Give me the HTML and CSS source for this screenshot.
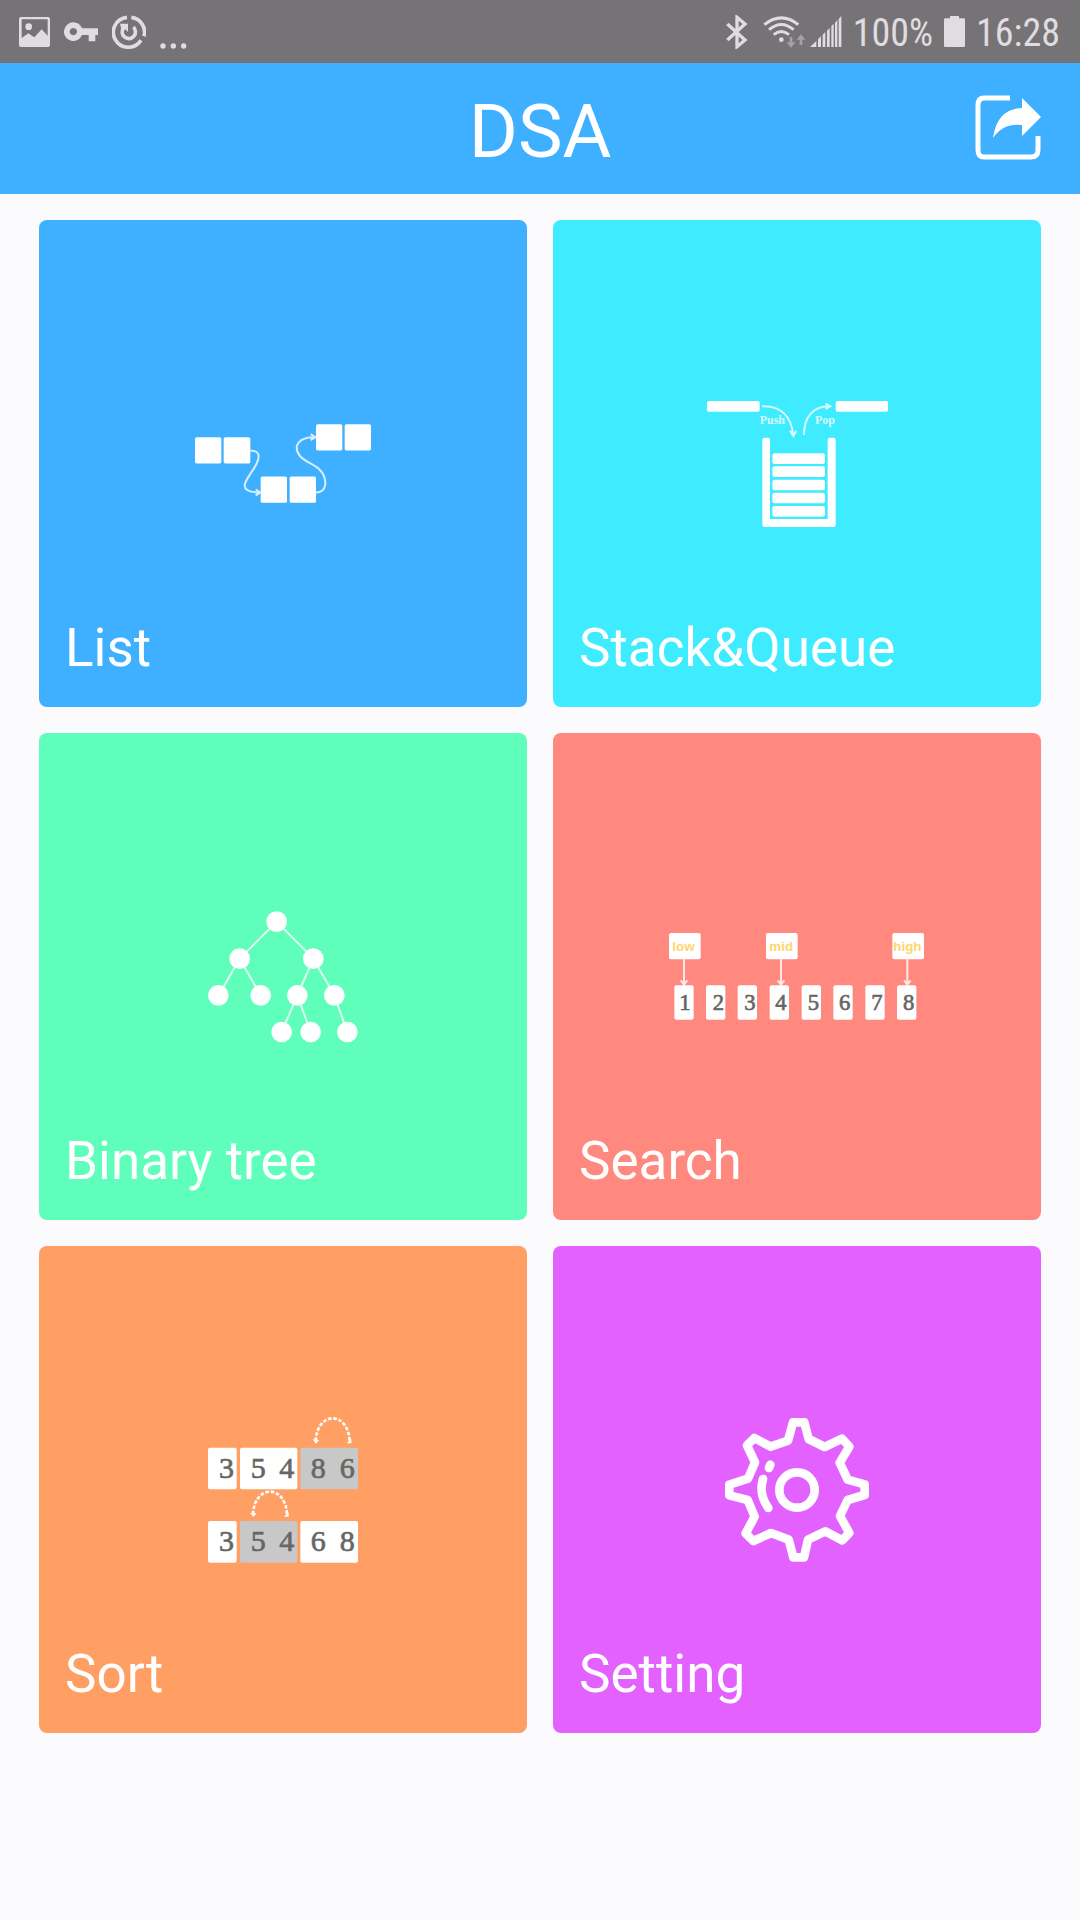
FILE: index.html
```
<!DOCTYPE html>
<html lang="en">
<head>
  <meta charset="UTF-8">
  <title>DSA</title>
  <meta name="viewport" content="width=device-width, initial-scale=1.0">
  <link rel="stylesheet" href="styles.css">
</head>
<body>
  <div class="status">
    <div class="status-left">
      <svg width="31" height="30" viewBox="57 48 93 90">
        <path fill="currentColor" fill-rule="evenodd" d="M63 48h81q6 0 6 6v78q0 6-6 6H63q-6 0-6-6V54q0-6 6-6zM65 55v56l20-14 18 12 22-24 18 19V55z"/>
        <circle cx="86" cy="77" r="10" fill="currentColor"/>
      </svg>
      <svg width="34" height="20" viewBox="194 65 102 60">
        <path fill="currentColor" fill-rule="evenodd" d="M222 66a28 28 0 0 1 26 18h48v20h-8v19h-20v-19h-20a28 28 0 1 1-26-38zM222 83a11 11 0 1 0 .1 0z"/>
      </svg>
      <svg width="34" height="34" viewBox="335 43 102 102">
        <g fill="none" stroke="currentColor">
          <path stroke-width="11" d="M380 50a45 45 0 1 0 42 69M431 107a45 45 0 0 0-38-57"/>
          <path stroke-width="11" d="M399 79a20 20 0 1 1-29 2"/>
        </g>
        <path fill="currentColor" d="M359 69h24v25l-8-8-10 8z"/>
      </svg>
      <svg class="dots" width="28" height="6" viewBox="481 122 84 18">
        <g fill="currentColor"><circle cx="490" cy="131" r="8"/><circle cx="521" cy="131" r="8"/><circle cx="552" cy="131" r="8"/></g>
      </svg>
    </div>
    <div class="status-right">
      <svg width="22" height="34" viewBox="70 43 66 102">
        <path fill="none" stroke="currentColor" stroke-width="10" d="M74 70l53 48-24 20V50l24 20-53 48"/>
      </svg>
      <svg class="wifi" width="42" height="33" viewBox="182 43 126 99">
        <g fill="none" stroke="currentColor" stroke-width="9">
          <path d="M186 72q51-41 102 0M200 87q37-31 74 0M214 102q23-19 46 0"/>
        </g>
        <circle cx="237" cy="117" r="7" fill="currentColor"/>
        <path class="traffic" d="M262 109h8v16h9l-13 16-13-16h9zM292 133h8v-16h9l-13-16-13 16h9z"/>
      </svg>
      <svg class="signal" width="32" height="31" viewBox="326 48 96 93">
        <path fill="currentColor" d="M326 141l19-18v18zM350 118l9-9v32h-9zM364 104l8-8v45h-8zM377 92l8-8v57h-8zM390 79l7-8v70h-7zM401 68l7-8v81h-7zM412 57l8-9v93h-8z"/>
      </svg>
      <span>100%</span>
      <svg width="21" height="31" viewBox="726 48 63 93">
        <path fill="currentColor" d="M744 48h27v7h14q4 0 4 4v78q0 4-4 4h-55q-4 0-4-4V59q0-4 4-4h14z"/>
      </svg>
      <span>16:28</span>
    </div>
  </div>

  <header class="header">
    <h1>DSA</h1>
    <button class="share" type="button" aria-label="Share">
      <svg width="66" height="66" viewBox="0 0 66 66">
        <path fill="none" stroke="#fff" stroke-width="5" d="M35 3H9Q3 3 3 10v45q0 7 6 7h47q7 0 7-7V41"/>
        <path fill="#fff" d="M47 3l19 19-19 19V30Q28 28 18 43 22 14 47 13z"/>
      </svg>
    </button>
  </header>

  <main class="menu">
    <a class="card list" href="#list">
      <svg width="176" height="79" viewBox="45 72 528 236">
        <g fill="#fff">
          <rect x="45" y="111" width="79" height="79" rx="5"/><rect x="131" y="111" width="80" height="79" rx="5"/>
          <rect x="242" y="229" width="79" height="79" rx="5"/><rect x="329" y="229" width="79" height="79" rx="5"/>
          <rect x="408" y="72" width="79" height="79" rx="5"/><rect x="494" y="72" width="79" height="79" rx="5"/>
        </g>
        <g class="line">
          <path d="M211 152c26-2 30 14 19 38-10 22-36 50-36 66 0 15 14 21 46 21M227 268l14 9-14 9"/>
          <path d="M408 277c24 0 32-20 26-43-10-41-59-43-76-69-20-29 0-56 48-54M392 102l14 9-14 9"/>
        </g>
      </svg>
      <span>List</span>
    </a>

    <a class="card stack" href="#stack">
      <svg width="181" height="126" viewBox="48 45 543 378">
        <g fill="#fff">
          <rect x="48" y="45" width="158" height="32" rx="5"/>
          <rect x="434" y="45" width="157" height="32" rx="5"/>
          <path d="M221 155h9q7 0 7 7v237h173V162q0-7 7-7h10q7 0 7 7v254q0 7-7 7H221q-7 0-7-7V162q0-7 7-7z"/>
          <rect x="244" y="202" width="158" height="32" rx="7"/>
          <rect x="244" y="241" width="158" height="32" rx="7"/>
          <rect x="244" y="281" width="158" height="32" rx="7"/>
          <rect x="244" y="320" width="158" height="32" rx="7"/>
          <rect x="244" y="360" width="158" height="32" rx="7"/>
        </g>
        <g class="line">
          <path d="M213 61c55-2 88 28 94 88M297 134l10 16 9-16"/>
          <path d="M339 147c0-52 26-88 79-86M404 53l14 8-14 8"/>
        </g>
        <text class="op" x="206" y="114">Push</text>
        <text class="op" x="372" y="114">Pop</text>
      </svg>
      <span>Stack&amp;Queue</span>
    </a>

    <a class="card tree" href="#tree">
      <svg width="150" height="132" viewBox="54 62 450 396">
        <path class="line" d="M86 315l63-110 63 110M149 205L260 94l110 111-48 110-47 110M322 315l40 110M370 205l63 110 39 110"/>
        <g fill="#fff">
          <circle cx="260" cy="94" r="31"/>
          <circle cx="149" cy="205" r="31"/><circle cx="370" cy="205" r="31"/>
          <circle cx="85" cy="315" r="31"/><circle cx="212" cy="315" r="31"/><circle cx="322" cy="315" r="31"/><circle cx="433" cy="315" r="31"/>
          <circle cx="275" cy="425" r="31"/><circle cx="362" cy="425" r="31"/><circle cx="472" cy="425" r="31"/>
        </g>
      </svg>
      <span>Binary tree</span>
    </a>

    <a class="card search" href="#search">
      <svg width="256" height="88" viewBox="57 66 768 264">
        <g fill="#fff">
          <rect x="57" y="66" width="95" height="79" rx="6"/><rect x="348" y="66" width="95" height="79" rx="6"/><rect x="727" y="66" width="95" height="79" rx="6"/>
          <rect x="73" y="223" width="58" height="103" rx="6"/><rect x="168" y="223" width="58" height="103" rx="6"/>
          <rect x="263" y="223" width="58" height="103" rx="6"/><rect x="359" y="223" width="58" height="103" rx="6"/>
          <rect x="455" y="223" width="58" height="103" rx="6"/><rect x="550" y="223" width="58" height="103" rx="6"/>
          <rect x="646" y="223" width="58" height="103" rx="6"/><rect x="741" y="223" width="58" height="103" rx="6"/>
        </g>
        <path class="line" d="M102 145v75M92 208l10 12 10-12M393 145v75M383 208l10 12 10-12M772 145v75M762 208l10 12 10-12"/>
        <g class="pointer">
          <text x="67" y="121">low</text><text x="358" y="121">mid</text><text x="730" y="121">high</text>
        </g>
        <g class="digit">
          <text x="88" y="298">1</text><text x="188" y="298">2</text><text x="283" y="298">3</text><text x="376" y="298">4</text>
          <text x="473" y="298">5</text><text x="567" y="298">6</text><text x="664" y="298">7</text><text x="759" y="298">8</text>
        </g>
      </svg>
      <span>Search</span>
    </a>

    <a class="card sort" href="#sort">
      <svg width="150" height="146" viewBox="54 51 450 438">
        <g fill="#fff">
          <rect x="54" y="143" width="86" height="125" rx="6"/><rect x="150" y="143" width="172" height="125" rx="6"/>
          <rect x="54" y="363" width="86" height="125" rx="6"/><rect x="331" y="363" width="173" height="125" rx="6"/>
        </g>
        <g fill="#c8c8c8">
          <rect x="331" y="143" width="173" height="125" rx="6"/><rect x="150" y="363" width="172" height="125" rx="6"/>
        </g>
        <g class="swap">
          <path d="M377 124c4-92 98-92 102 0"/><path d="M189 344c4-92 98-92 102 0"/>
        </g>
        <path fill="#fff" d="M368 118l20 2-10 11zM484 117v13h-14zM180 338l20 2-10 11zM296 337v13h-14z"/>
        <g class="digit big">
          <text x="87" y="233">3</text><text x="182" y="233">5</text><text x="268" y="233">4</text><text x="362" y="233">8</text><text x="449" y="233">6</text>
          <text x="87" y="453">3</text><text x="182" y="453">5</text><text x="268" y="453">4</text><text x="362" y="453">6</text><text x="449" y="453">8</text>
        </g>
      </svg>
      <span>Sort</span>
    </a>

    <a class="card setting" href="#setting">
      <svg width="144" height="144" viewBox="45 51 432 432">
        <g class="gear">
          <path d="M249 64h34l13 50 48 24 52-25 22 24-29 48 24 51 51 14v32l-51 15-23 48 28 51-21 22-51-27-52 25-12 53h-32l-14-53-53-20-53 24-23-23 27-50-21-50-55-14v-32l56-18 21-49-24-51 22-22 49 26 52-18z"/>
          <circle cx="261" cy="267" r="53"/>
          <path d="M159 234q-14 45 16 87M177 201l4-10"/>
        </g>
      </svg>
      <span>Setting</span>
    </a>
  </main>
</body>
</html>
```
FILE: styles.css
```
body {
  background: #fbfafc;
  color: #fff;
  font-family: Roboto, Arial, sans-serif;
  margin: 0;
}
svg {
  display: block;
  flex: none;
}
.status {
  display: flex;
  justify-content: space-between;
  align-items: center;
  box-sizing: border-box;
  height: 63px;
  padding: 0 20px 0 19px;
  background: #757375;
  color: #e0dce0;
  font-family: "Roboto Condensed", "Liberation Sans Narrow", Roboto, sans-serif;
  font-size: 38px;
}
.status-left,
.status-right {
  display: flex;
  align-items: center;
}
.status-left {
  gap: 14px;
}
.status-right {
  gap: 11px;
}
.status-right span {
  padding-top: 2px;
}
.dots {
  align-self: flex-end;
}
.wifi {
  margin-left: 4px;
}
.signal {
  margin-left: -6px;
}
.traffic {
  fill: #a5a2a5;
}
.header {
  display: grid;
  grid-template-columns: 1fr auto 1fr;
  align-items: center;
  height: 131px;
  padding: 0 39px;
  background: #3eb0ff;
}
h1 {
  grid-column: 2;
  margin: 0;
  padding-top: 4px;
  font-size: 75px;
  font-weight: 400;
  line-height: 88px;
}
.share {
  justify-self: end;
  padding: 0 0 2px;
  border: none;
  background: none;
}
.menu {
  display: grid;
  grid-template-columns: 1fr 1fr;
  gap: 26px;
  padding: 26px 39px;
}
.card {
  display: grid;
  aspect-ratio: 488 / 487;
  border-radius: 8px;
  color: #fff;
  text-decoration: none;
}
/* drawing and title share the same cell */
.card svg,
.card span {
  grid-area: 1 / 1;
}
.card svg {
  place-self: center;
}
.card span {
  align-self: end;
  padding: 0 26px 27px;
  font-size: 53px;
  line-height: 64px;
}
.list { background: #3eb0ff; }
.stack { background: #3eebff; }
.tree { background: #5fffbb; }
.search { background: #ff897e; }
.sort { background: #ff9f63; }
.setting { background: #e362ff; }

.line {
  fill: none;
  stroke: #fff;
  stroke-width: 6px;
  stroke-opacity: 0.8;
}
.op {
  fill: #fff;
  fill-opacity: 0.8;
  font: bold 36px "Liberation Serif", serif;
}
.pointer {
  fill: #ffd570;
  font: bold 40px "Liberation Sans", sans-serif;
}
.digit {
  fill: #666;
  stroke: #666;
  stroke-width: 2px;
  font: 68px "Liberation Serif", serif;
}
.big {
  font-size: 90px;
}
.swap {
  fill: none;
  stroke: #fff;
  stroke-width: 8px;
  stroke-dasharray: 11 5;
}
.gear {
  fill: none;
  stroke: #fff;
  stroke-width: 26px;
  stroke-linecap: round;
  stroke-linejoin: round;
}
```
